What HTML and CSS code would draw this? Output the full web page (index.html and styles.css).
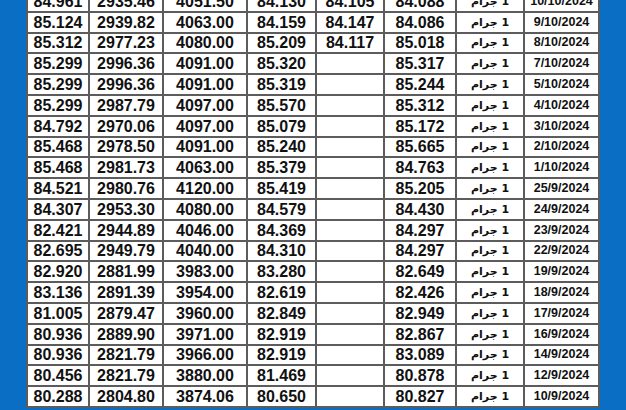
FILE: index.html
```html
<!DOCTYPE html>
<html lang="ar">
<head>
<meta charset="utf-8">
<link rel="stylesheet" href="styles.css">
</head>
<body>
<div class="page">
<table class="prices">
<colgroup>
<col class="c1"><col class="c2"><col class="c3"><col class="c4"><col class="c5"><col class="c6"><col class="c7"><col class="c8">
</colgroup>
<tbody>
<tr><td>84.961</td><td>2935.46</td><td>4051.50</td><td>84.130</td><td>84.105</td><td>84.088</td><td class="unit" dir="rtl">1 جرام</td><td class="date">10/10/2024</td></tr>
<tr><td>85.124</td><td>2939.82</td><td>4063.00</td><td>84.159</td><td>84.147</td><td>84.086</td><td class="unit" dir="rtl">1 جرام</td><td class="date">9/10/2024</td></tr>
<tr><td>85.312</td><td>2977.23</td><td>4080.00</td><td>85.209</td><td>84.117</td><td>85.018</td><td class="unit" dir="rtl">1 جرام</td><td class="date">8/10/2024</td></tr>
<tr><td>85.299</td><td>2996.36</td><td>4091.00</td><td>85.320</td><td></td><td>85.317</td><td class="unit" dir="rtl">1 جرام</td><td class="date">7/10/2024</td></tr>
<tr><td>85.299</td><td>2996.36</td><td>4091.00</td><td>85.319</td><td></td><td>85.244</td><td class="unit" dir="rtl">1 جرام</td><td class="date">5/10/2024</td></tr>
<tr><td>85.299</td><td>2987.79</td><td>4097.00</td><td>85.570</td><td></td><td>85.312</td><td class="unit" dir="rtl">1 جرام</td><td class="date">4/10/2024</td></tr>
<tr><td>84.792</td><td>2970.06</td><td>4097.00</td><td>85.079</td><td></td><td>85.172</td><td class="unit" dir="rtl">1 جرام</td><td class="date">3/10/2024</td></tr>
<tr><td>85.468</td><td>2978.50</td><td>4091.00</td><td>85.240</td><td></td><td>85.665</td><td class="unit" dir="rtl">1 جرام</td><td class="date">2/10/2024</td></tr>
<tr><td>85.468</td><td>2981.73</td><td>4063.00</td><td>85.379</td><td></td><td>84.763</td><td class="unit" dir="rtl">1 جرام</td><td class="date">1/10/2024</td></tr>
<tr><td>84.521</td><td>2980.76</td><td>4120.00</td><td>85.419</td><td></td><td>85.205</td><td class="unit" dir="rtl">1 جرام</td><td class="date">25/9/2024</td></tr>
<tr><td>84.307</td><td>2953.30</td><td>4080.00</td><td>84.579</td><td></td><td>84.430</td><td class="unit" dir="rtl">1 جرام</td><td class="date">24/9/2024</td></tr>
<tr><td>82.421</td><td>2944.89</td><td>4046.00</td><td>84.369</td><td></td><td>84.297</td><td class="unit" dir="rtl">1 جرام</td><td class="date">23/9/2024</td></tr>
<tr><td>82.695</td><td>2949.79</td><td>4040.00</td><td>84.310</td><td></td><td>84.297</td><td class="unit" dir="rtl">1 جرام</td><td class="date">22/9/2024</td></tr>
<tr><td>82.920</td><td>2881.99</td><td>3983.00</td><td>83.280</td><td></td><td>82.649</td><td class="unit" dir="rtl">1 جرام</td><td class="date">19/9/2024</td></tr>
<tr><td>83.136</td><td>2891.39</td><td>3954.00</td><td>82.619</td><td></td><td>82.426</td><td class="unit" dir="rtl">1 جرام</td><td class="date">18/9/2024</td></tr>
<tr><td>81.005</td><td>2879.47</td><td>3960.00</td><td>82.849</td><td></td><td>82.949</td><td class="unit" dir="rtl">1 جرام</td><td class="date">17/9/2024</td></tr>
<tr><td>80.936</td><td>2889.90</td><td>3971.00</td><td>82.919</td><td></td><td>82.867</td><td class="unit" dir="rtl">1 جرام</td><td class="date">16/9/2024</td></tr>
<tr><td>80.936</td><td>2821.79</td><td>3966.00</td><td>82.919</td><td></td><td>83.089</td><td class="unit" dir="rtl">1 جرام</td><td class="date">14/9/2024</td></tr>
<tr><td>80.456</td><td>2821.79</td><td>3880.00</td><td>81.469</td><td></td><td>80.878</td><td class="unit" dir="rtl">1 جرام</td><td class="date">12/9/2024</td></tr>
<tr><td>80.288</td><td>2804.80</td><td>3874.06</td><td>80.650</td><td></td><td>80.827</td><td class="unit" dir="rtl">1 جرام</td><td class="date">10/9/2024</td></tr>
</tbody>
</table>
</div>
</body>
</html>
```
FILE: styles.css
```css
html, body {
  margin: 0;
  padding: 0;
  background: #0a6ec4;
  overflow: hidden;
}
.page {
  width: 626px;
  height: 410px;
  overflow: hidden;
  padding-left: 26px;
  box-sizing: border-box;
}
.prices {
  margin-top: -10px;
  border-collapse: collapse;
  table-layout: fixed;
  width: 572px;
  background: #ffffff;
  font-family: "Liberation Sans", Arial, "DejaVu Sans", sans-serif;
  font-weight: bold;
  color: #111;
  border: 2px solid #333;
}
.c1 { width: 62px; }
.c2 { width: 74px; }
.c3 { width: 84px; }
.c4 { width: 69px; }
.c5 { width: 68px; }
.c6 { width: 72px; }
.c7 { width: 68px; }
.c8 { width: 75px; }
.prices tr {
  height: 20.8px;
}
.prices td {
  border: 2px solid #5c5c5c;
  padding: 0;
  text-align: center;
  font-size: 16px;
  line-height: 17px;
  white-space: nowrap;
  overflow: hidden;
}
.prices td.unit {
  font-family: "DejaVu Sans", "Liberation Sans", sans-serif;
  font-size: 11px;
}
.prices td.date {
  font-size: 12.5px;
}
```
